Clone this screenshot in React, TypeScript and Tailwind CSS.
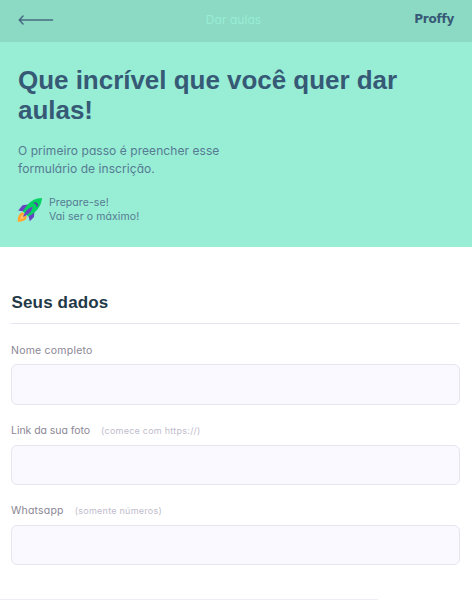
const body = 'font-["Inter","Open_Sans",sans-serif] [font-feature-settings:"cv11"]';
const heading = 'font-["Liberation_Sans",Arial,sans-serif] font-bold';

function BackArrow() {
  return (
    <svg width="36" height="12" viewBox="0 0 36 12" fill="none" stroke="#466983" strokeWidth="1.5" strokeLinecap="round">
      <path d="M1.5 6H34.5M5 2L1.3 6L5 10" />
    </svg>
  );
}

function Rocket() {
  return (
    <svg width="26" height="26" viewBox="0 0 26 26" className="shrink-0">
      <path d="M5.5 15C1.5 17 0.7 20 0.7 24.7C5 24.7 8.8 24 10 20Z" fill="#ffa72c" />
      <path d="M5.5 17.5C3.8 18.7 3.5 20.3 3.4 22.2C5.3 22 7 21.5 8 19.7Z" fill="#ffc268" />
      <path d="M11 7.5L5.5 8.3L1.2 13.4L7 14.5Z M17.5 14L17 20L12.8 24.3L11.2 18Z" fill="#6842c2" />
      <path d="M25 1C17 1 11.5 5 5.8 14.2L11.2 19.5C20 15 24.5 8.5 25 1Z" fill="#04d361" />
      <path d="M15.7 9.8C11.5 11 8 14 6 19.9C12 17.5 14.8 14 15.7 9.8Z" fill="#6842c2" />
      <path d="M17.2 5.3C19.5 4.8 21.5 6.5 20.9 9L19.5 10.4C20 8 18.8 6.3 16.2 6.4Z" fill="#5b38b0" />
    </svg>
  );
}

function Field({ label, labelClass, hint, hintClass }: { label: string; labelClass: string; hint?: string; hintClass?: string }) {
  return (
    <label className="block h-[80.25px]">
      <span className="flex h-[20px] items-center whitespace-nowrap">
        <span className={"text-[10.5px] text-[#8b8795] " + labelClass}>{label}</span>
        {hint && <span className={"pb-[1px] text-[9px] text-[#c1bccc] " + hintClass}>{hint}</span>}
      </span>
      <input className="mt-[3.8px] block h-[40.2px] w-full rounded-[6px] border border-[#e6e6f0] bg-[#faf9ff] px-3 outline-none" />
    </label>
  );
}

export default function App() {
  return (
    <div className={"h-[600px] overflow-hidden bg-white " + body}>
      <header className="bg-[#98edd5]">
        <div className="grid h-[42px] grid-cols-3 items-center bg-[#8cdac3] pr-[18px] pl-[18px] pb-[2px]">
          <a className="block"><BackArrow /></a>
          <span className="pr-[5px] text-center text-[12px] leading-[18px] tracking-[0.05px] text-[#98edd5]">Dar aulas</span>
          <span className='justify-self-end pb-[2px] font-["DejaVu_Sans",sans-serif] text-[12px] font-bold leading-[18px] tracking-[-0.25px] text-[#365976]'>Proffy</span>
        </div>
        <div className="h-[205px] px-[18px] pt-[23px]">
          <h1 className={"text-[26px] leading-[30px] text-[#365976] whitespace-nowrap tracking-[-0.03px] " + heading}>
            Que incrível que você quer dar<br />aulas!
          </h1>
          <p className="mt-[17px] text-[12px] leading-[18px] tracking-[0.06px] whitespace-nowrap text-[#557b92]">
            O primeiro passo é preencher esse<br />formulário de inscrição.
          </p>
          <div className="-ml-[1px] mt-[18px] flex items-center">
            <Rocket />
            <p className="ml-[6px] text-[10.5px] leading-[14px] tracking-[0.08px] whitespace-nowrap text-[#557b92]">
              Prepare-se!<br />Vai ser o máximo!
            </p>
          </div>
        </div>
      </header>
      <main className="pr-[12px] pl-[11px] pt-[44px]">
        <h2 className={"h-[33px] border-b border-[#e6e6f0] pl-[0.5px] text-[17px] leading-[23px] tracking-[0.15px] text-[#1f3947] " + heading}>Seus dados</h2>
        <div className="pt-[16.6px]">
          <Field label="Nome completo" labelClass="tracking-[0.22px]" />
          <Field label="Link da sua foto" labelClass="tracking-[-0.05px]" hint="(comece com https://)" hintClass="ml-[11px] tracking-[0.25px]" />
          <Field label="Whatsapp" labelClass="tracking-[0.2px]" hint="(somente números)" hintClass="ml-[11px] tracking-[0.25px]" />
        </div>
      </main>
      <div className="mt-[17.5px] h-px w-[378px] bg-[#eeeef4]" />
    </div>
  );
}
